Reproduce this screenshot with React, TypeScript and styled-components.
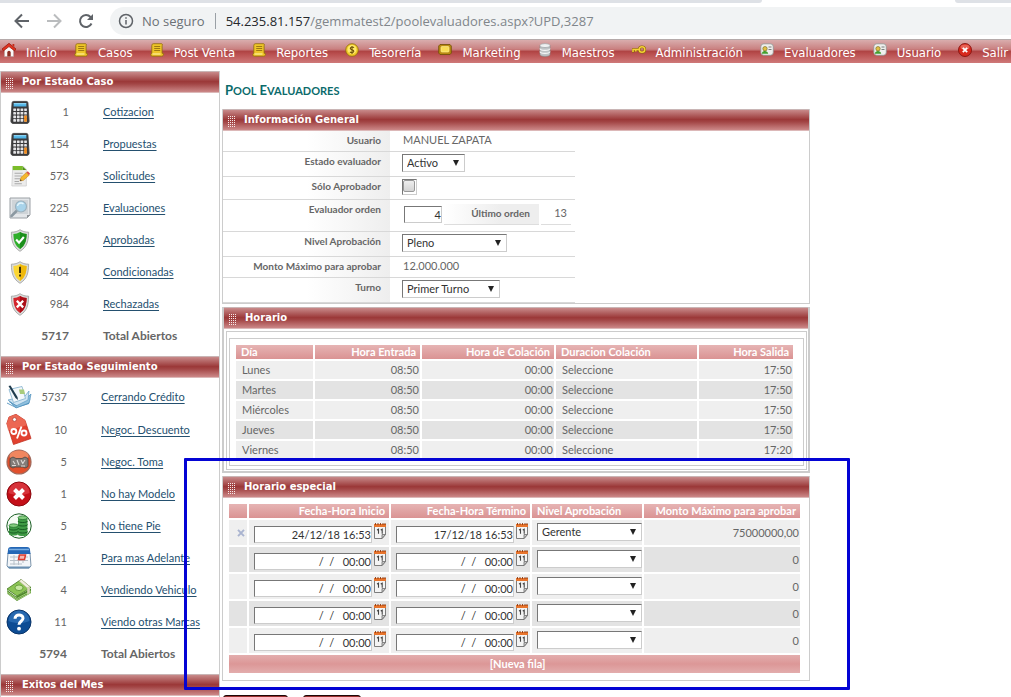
import React from "react";
import styled, { createGlobalStyle } from "styled-components";

const sans = `Lato, "Open Sans", "Liberation Sans", sans-serif`;
const wide = `"DejaVu Sans", Verdana, sans-serif`;
const line = "#cccccc";

const Global = createGlobalStyle`
  * { box-sizing: border-box; }
  html, body { margin: 0; height: 100%; }
  body {
    background: #fff;
    color: #666;
    font: 11px/14px ${sans};
    overflow: hidden;
  }
`;

/* ---------- browser bar ---------- */
const Tabs = styled.div`
  display: flex;
  height: 3px;
  background: #fff;
`;
const TabSpace = styled.div<{ $grow: number; $side: "left" | "right" }>`
  flex: ${(p) => p.$grow} 1 0;
  background: #dee1e6;
  border-radius: ${(p) => (p.$side === "left" ? "0 0 6px 0" : "0 0 0 6px")};
`;
const TabGap = styled.div`
  flex: 193 1 0;
`;
const Toolbar = styled.div`
  display: flex;
  align-items: center;
  height: 36px;
  padding: 0 0 0 14px;
`;
const NavButton = styled.button`
  display: block;
  border: 0;
  padding: 0;
  margin-right: 16px;
  width: 16px;
  height: 16px;
  background: none;
  svg { display: block; }
`;
const Address = styled.div`
  flex: 1;
  display: flex;
  align-items: center;
  height: 28px;
  padding-left: 8px;
  border-radius: 14px 0 0 14px;
  background: #f1f3f4;
  color: #80868b;
  font: 13px/20px "Open Sans", sans-serif;
  white-space: nowrap;
`;
const Security = styled.span`
  margin-left: 8px;
  padding-right: 10px;
  margin-right: 10px;
  border-right: 1px solid #9aa0a6;
  line-height: 16px;
  color: #6b7075;
`;
const Host = styled.span`
  color: #25282c;
`;

/* ---------- menu ---------- */
const Menu = styled.nav`
  display: flex;
  gap: 17px;
  height: 24px;
  padding: 3px 0 0 2px;
  overflow: hidden;
  border-top: 1px solid #b5aaaa;
  background: linear-gradient(#d9adad 0, #c98080 40%, #b04444 50%, #b94e4e 60%, #cf7979 100%);
`;
const MenuLink = styled.a`
  display: flex;
  flex: none;
  gap: 10px;
  color: #fff;
  font: 13px/20px "DejaVu Sans Condensed", "Open Sans", sans-serif;
  text-decoration: none;
  svg { display: block; flex: none; }
`;

/* ---------- layout ---------- */
const Page = styled.div`
  position: relative;
`;
const Columns = styled.div`
  display: flex;
  align-items: flex-start;
  gap: 2px;
  padding-top: 8px;
`;
const Sidebar = styled.aside`
  flex: 0 0 220px;
  border: solid ${line};
  border-width: 0 1px;
`;
const Main = styled.main`
  flex: 1;
  max-width: 588px;
`;
const Title = styled.h1`
  display: flex;
  gap: 3px;
  margin: 0;
  padding: 10px 3px;
  color: #0b6b6b;
  font: bold 11px/18px ${sans};
  text-transform: uppercase;
`;
const TitleWord = styled.span`
  display: block;
  height: 18px;
  &::first-letter { font-size: 13px; }
`;
const Bar = styled.h2`
  display: flex;
  align-items: center;
  gap: 8px;
  height: 22px;
  margin: 0;
  padding: 0 0 1px 5px;
  border-top: 1px solid #c9b5b5;
  border-bottom: 1px solid #dcb8b8;
  background: linear-gradient(#c88a8a 0, #9b3838 48%, #a34646 60%, #cc8888 100%);
  color: #fff;
  font: bold 10px/18px ${wide};
  svg { display: block; margin-top: 3px; }
`;

/* ---------- sidebar ---------- */
const Group = styled.section`
  padding-bottom: 4px;
`;
const GroupList = styled.ul`
  list-style: none;
  margin: 0;
  padding: 3px 0 0;
`;
const GroupRow = styled.li<{ $inset: number; $bold?: boolean }>`
  display: grid;
  grid-template-columns: ${(p) => p.$inset}px 30px 1fr;
  align-items: center;
  min-height: 32px;
  font-size: ${(p) => (p.$bold ? "12px" : "11px")};
  font-weight: ${(p) => (p.$bold ? "bold" : "normal")};
`;
const IconCell = styled.span`
  display: flex;
  justify-content: center;
`;
const Count = styled.span`
  text-align: right;
`;
const GroupLink = styled.a`
  color: #24506f;
  text-decoration: underline;
  text-underline-offset: 2px;
`;
const GroupLabel = styled.span`
  padding-left: 34px;
`;

/* ---------- panels ---------- */
const Panel = styled.section<{ $thick?: boolean }>`
  margin-bottom: 3px;
  border: ${(p) => (p.$thick ? 2 : 1)}px solid ${line};
  border-top-width: 0;
`;
const Form = styled.form`
  max-width: 352px;
`;
const FormRow = styled.div`
  display: grid;
  grid-template-columns: 167px 1fr;
  border-bottom: 1px solid #d8d8d8;
`;
const LabelCell = styled.div`
  padding: 2px 9px 0 0;
  background: linear-gradient(90deg, #fff 50%, #eee);
  text-align: right;
  font-size: 10px;
  font-weight: bold;
`;
const ValueCell = styled.div`
  padding: 2px 0 4px 12px;
`;
const PlainValue = styled.span`
  padding-left: 1px;
`;
const SelectBox = styled.span<{ $width: number }>`
  position: relative;
  display: block;
  width: ${(p) => p.$width}px;
  &::after {
    content: "";
    position: absolute;
    right: 6px;
    top: 6px;
    border: solid transparent;
    border-width: 6px 3px 0;
    border-top-color: #222;
    pointer-events: none;
  }
`;
const Select = styled.select`
  display: block;
  appearance: none;
  width: 100%;
  height: 18px;
  padding: 0 4px;
  border: 1px solid;
  border-color: #777 #ccc #ccc #777;
  border-radius: 0;
  background: #fff;
  color: #333;
  font: 11px/14px ${sans};
`;
const Field = styled.input`
  flex: none;
  width: 118px;
  height: 17px;
  padding: 0;
  border: 1px solid;
  border-color: #777 #ccc #ccc #777;
  background: #fff;
  color: #333;
  font: 11px/14px ${sans};
  text-align: right;
`;
const OrderField = styled(Field)`
  width: 38px;
  margin-top: 2px;
`;
const CheckFrame = styled.span`
  display: block;
  width: 15px;
  height: 16px;
  border: 1px solid;
  border-color: #777 #ccc #ccc #777;
`;
const Check = styled.input`
  display: block;
  appearance: none;
  width: 12px;
  height: 12px;
  margin: 0;
  border: 1px solid #999;
  border-radius: 2px;
  background: linear-gradient(#eee, #d4d4d4);
`;
const OrderLine = styled.div`
  display: flex;
  gap: 2px;
  padding: 2px;
`;
const OrderCell = styled.div<{ $head?: boolean }>`
  width: ${(p) => (p.$head ? 95 : 30)}px;
  height: 21px;
  padding: 2px ${(p) => (p.$head ? 9 : 4)}px 0 0;
  border-bottom: 1px solid #ddd;
  background: ${(p) => (p.$head ? "linear-gradient(90deg, #fff, #eee 60%)" : "none")};
  font-size: ${(p) => (p.$head ? 10 : 11)}px;
  font-weight: ${(p) => (p.$head ? "bold" : "normal")};
  text-align: right;
`;

const OuterFrame = styled.div`
  margin: 2px 1px 1px 2px;
  padding: 6px 2px 3px;
  border: 1px solid ${line};
`;
const InnerFrame = styled.div`
  padding: 4px 8px 4px 4px;
  border: 1px solid ${line};
`;
const EspecialFrame = styled.div`
  padding: 4px 7px 5px 4px;
`;
const Grid = styled.table`
  width: 100%;
  table-layout: fixed;
  border-collapse: separate;
  border-spacing: 2px;
`;
const Head = styled.th<{ $right?: boolean }>`
  height: 14px;
  padding: 0 4px 0 5px;
  background: linear-gradient(#e6b4b4, #da9393);
  color: #fff;
  line-height: 14px;
  text-align: ${(p) => (p.$right ? "right" : "left")};
  white-space: nowrap;
`;
const Row = styled.tr`
  background: #efefef;
  &:nth-child(even) { background: #e3e3e3; }
`;
const Cell = styled.td<{ $right?: boolean }>`
  height: 18px;
  padding: ${(p) => (p.$right ? "0 1px 0 0" : "0 0 0 6px")};
  text-align: ${(p) => (p.$right ? "right" : "left")};
`;
const ControlCell = styled.td`
  height: 25px;
  padding: 0 0 0 5px;
  vertical-align: top;
`;
const SelectPad = styled.div`
  padding-top: 3px;
`;
const DateLine = styled.div`
  display: flex;
  align-items: flex-end;
  gap: 2px;
  height: 23px;
`;
const IconButton = styled.button`
  border: 0;
  padding: 0 0 4px;
  background: none;
  svg { display: block; }
`;
const RemoveCell = styled.td`
  padding: 0;
  text-align: center;
`;
const RemoveButton = styled.button`
  display: block;
  margin: 0 auto;
  padding: 0 0 0 5px;
  border: 0;
  background: none;
  svg { display: block; }
`;
const FootCell = styled.td`
  height: 18px;
  padding: 0;
  background: linear-gradient(#e3adad, #dc9797 50%, #e3adad);
  text-align: center;
`;
const AddRow = styled.button`
  display: block;
  margin: 0 auto;
  padding: 0 0 0 6px;
  border: 0;
  background: none;
  color: #fff;
  font: bold 11px/18px ${sans};
`;
const Actions = styled.div`
  display: flex;
  gap: 15px;
  padding: 11px 0 0 1px;
`;
const Action = styled.button<{ $width: number }>`
  width: ${(p) => p.$width}px;
  height: 26px;
  padding: 8px 0 0;
  border: 1px solid #1c0808;
  border-radius: 3px;
  background: #9b3030;
  color: #fff;
  font: bold 11px/14px ${sans};
`;
const Marker = styled.div`
  position: absolute;
  left: 184px;
  top: 458px;
  width: 666px;
  height: 232px;
  border: 3px solid #0404d4;
  border-radius: 1px;
  pointer-events: none;
`;

/* ---------- drawings ---------- */
const Grip = () => (
  <svg width="8" height="11" viewBox="0 0 8 11" shapeRendering="crispEdges">
    {[0, 2, 4, 6, 8, 10].map((y) =>
      [0, 2, 4, 6].map((x) => <rect key={`${x}-${y}`} x={x} y={y} width="1" height="1" fill="#f7e9e9" />)
    )}
  </svg>
);
const HomeIcon = () => (
  <svg width="14" height="14" viewBox="0 0 14 14">
    <path d="M2.500 6v7.500h9V6L7 2z" fill="#fbf7f6" stroke="#b9a5a5" strokeWidth=".6" />
    <path d="M5.300 13.500V9.500a1.700 1.700 0 0 1 3.400 0v4z" fill="#8c2a20" />
    <path d="M10.500 1h1.800v3l-1.800-1.400z" fill="#c72817" />
    <path d="M7 .3 0 6l1.400 1.900L7 3.600l5.600 4.300L14 6z" fill="#e2321f" stroke="#8f1409" strokeWidth=".7" />
  </svg>
);
const ScrollIcon = () => (
  <svg width="14" height="14" viewBox="0 0 14 14">
    <path d="M3.500.7h7.700c1.400 0 1.600 1.400.9 2v7.500l1.300.3c.3 1.700-.6 2.700-1.800 2.700H2.400C.4 13.200.2 10.800 1.800 10.200V2.600C1.800 1.400 2.500.7 3.500.7z" fill="#eec529" stroke="#8d6b0c" strokeWidth=".8" />
    <path d="M4.200 3.500h6M4.200 5.500h6M4.200 7.500h6" stroke="#94700f" strokeWidth=".9" />
    <path d="M2.500 11h8" stroke="#fbe88a" strokeWidth="1.400" />
  </svg>
);
const CoinIcon = () => (
  <svg width="14" height="14" viewBox="0 0 14 14">
    <circle cx="7" cy="7" r="6.300" fill="#f0c826" stroke="#8d6b0c" strokeWidth=".8" />
    <circle cx="7" cy="6.500" r="4.500" fill="#ffe96b" />
    <path d="M9 4.600C8 3.600 5.300 3.700 5.300 5.400c0 1.700 3.500 1 3.500 2.800 0 1.600-2.800 1.700-3.900.6M7 3v8" stroke="#6e5008" strokeWidth="1.100" fill="none" />
  </svg>
);
const TicketIcon = () => (
  <svg width="14" height="14" viewBox="0 0 14 14">
    <path d="M2 1.500h10l1.300 1.500v7L12 11.500H2L.7 10V3z" fill="#b98b10" stroke="#6d4e06" strokeWidth=".8" />
    <rect x="3" y="3.500" width="8" height="5.500" rx="1" fill="#f9dc55" stroke="#fff1a0" strokeWidth=".6" />
  </svg>
);
const DatabaseIcon = () => (
  <svg width="14" height="14" viewBox="0 0 14 14">
    <path d="M2 2.500v9c0 2.600 10 2.600 10 0v-9z" fill="#bfc3c6" stroke="#85898c" strokeWidth=".6" />
    <ellipse cx="7" cy="2.600" rx="5" ry="2" fill="#eff1f2" stroke="#95999c" strokeWidth=".6" />
    <path d="M2 5.600c0 2.400 10 2.400 10 0M2 8.600c0 2.400 10 2.400 10 0" stroke="#f5f6f7" fill="none" strokeWidth="1.100" />
  </svg>
);
const KeyIcon = () => (
  <svg width="14" height="14" viewBox="0 0 14 14">
    <circle cx="10" cy="6.500" r="2.800" fill="none" stroke="#8a680a" strokeWidth="2.600" />
    <path d="M7.500 6.500H1v3M3.800 6.500v2" stroke="#8a680a" strokeWidth="2.600" fill="none" />
    <circle cx="10" cy="6.500" r="2.800" fill="none" stroke="#f5cf36" strokeWidth="1.500" />
    <path d="M7.500 6.500H1v2.600M3.800 6.500v2" stroke="#f5cf36" strokeWidth="1.500" fill="none" />
  </svg>
);
const CardIcon = () => (
  <svg width="14" height="14" viewBox="0 0 14 14">
    <rect x=".8" y=".8" width="12.500" height="11.500" rx="3" fill="#efefed" stroke="#8f9390" strokeWidth=".8" />
    <path d="M8.500 4h3M8.500 6.500h3" stroke="#7b7f7d" />
    <path d="M1.800 10.700c.3-3.700 5.900-3.700 6.400 0z" fill="#41a02e" />
    <circle cx="5" cy="5.700" r="2.200" fill="#e2bf45" stroke="#6a641f" strokeWidth=".6" />
  </svg>
);
const CloseBallIcon = () => (
  <svg width="14" height="14" viewBox="0 0 14 14">
    <circle cx="7" cy="7" r="6.500" fill="#d8281d" stroke="#7d0d08" strokeWidth=".8" />
    <ellipse cx="7" cy="4" rx="4.500" ry="2.600" fill="#f07a6d" opacity=".7" />
    <path d="m4.800 4.800 4.400 4.400M9.200 4.800 4.800 9.200" stroke="#fff" strokeWidth="1.800" />
  </svg>
);
const CalculatorIcon = () => (
  <svg width="20" height="25" viewBox="0 0 22 26">
    <path d="M4 .8h14c1 0 1.500.5 1.700 1.500l1.300 20c0 1.600-.8 2.700-2.300 2.700H3.300C1.800 25 1 23.900 1 22.300l1.300-20C2.500 1.300 3 .8 4 .8z" fill="#3a3a3c" stroke="#444" />
    <path d="M4.200 2.500h13.600l.3 4H3.900z" fill="#4fb4e6" />
    <path d="M4.200 2.500h13.600l.1 1.500H4.100z" fill="#8ad3f3" />
    {[8.5, 12.4, 16.3, 20.2].map((y) =>
      [3.6, 7.6, 11.6, 15.6].map((x) => (
        <rect key={`${x}-${y}`} x={x} y={y} width="3" height="2.900" rx=".5" fill="#e4e4e6" />
      ))
    )}
    <rect x="15.600" y="16.300" width="3" height="6.800" rx=".5" fill="#f08a1c" />
  </svg>
);
const RequestIcon = () => (
  <svg width="20" height="24" viewBox="0 0 22 24">
    <path d="M3 1.500h12l3 3V23H2z" fill="#ececec" stroke="#c4c4c4" strokeWidth=".7" />
    <path d="M3 1h11v4.500H3z" fill="#7bbd2a" />
    <path d="M14 1.500 18 5.500h-4z" fill="#4f9212" />
    <path d="M5 9h9M5 12h8M5 15h6M5 18h5M5 20.500h8" stroke="#a9a9a9" strokeWidth="1.200" />
    <path d="m11 17.500 1-3.800 6-5.500 3 3-6.200 5.600z" fill="#f4b72d" stroke="#c17e12" strokeWidth=".6" />
    <path d="m18 8.200 1.500-1.400 2.500 2.500L21 11.200z" fill="#d9534b" />
    <path d="m11 17.500.6-2 1.400 1.500z" fill="#333" />
  </svg>
);
const SearchPaperIcon = () => (
  <svg width="22" height="22" viewBox="0 0 22 22">
    <path d="M1 1h20v17l-3 3H1z" fill="#e3e6e9" stroke="#9ba0a5" />
    <path d="M3 3h16v14H3z" fill="#cfd4d8" />
    <path d="m7.500 14-5 5" stroke="#8b98a1" strokeWidth="2.500" strokeLinecap="round" />
    <circle cx="12" cy="9.500" r="5.500" fill="#a8d3ea" stroke="#9db1bd" strokeWidth="1.200" />
    <path d="M8.500 9c.3-2.500 3.500-4.200 6-2" stroke="#e6f6fd" strokeWidth="1.400" fill="none" />
    <path d="M18 21v-3h3z" fill="#8d9297" />
  </svg>
);
const Shield = ({ fill, shade, children }: { fill: string; shade: string; children: React.ReactNode }) => (
  <svg width="20" height="23" viewBox="0 0 20 24">
    <path d="M10 .7c2.500 1.800 5.500 2.600 9 2.600 0 9.500-1.800 15.500-9 20C2.800 18.800 1 12.800 1 3.300c3.500 0 6.500-.8 9-2.600z" fill="#d9dad9" stroke="#9a9c9a" strokeWidth=".8" />
    <path d="M10 3.200c2 1.300 4.200 2 6.900 2.100-.2 7.400-1.700 12-6.900 15.600C4.800 17.300 3.300 12.700 3.100 5.300 5.800 5.200 8 4.500 10 3.200z" fill={fill} />
    <path d="M10 3.200c2 1.300 4.200 2 6.900 2.100-.2 7.400-1.700 12-6.900 15.600z" fill={shade} />
    {children}
  </svg>
);
const ShieldOk = () => (
  <Shield fill="#2fae2b" shade="#1b8f1c">
    <path d="m6 11 3 3.300 5-6" stroke="#fff" strokeWidth="2.200" fill="none" />
  </Shield>
);
const ShieldWarn = () => (
  <Shield fill="#fbd634" shade="#efb90c">
    <path d="M10 6v6.500M10 14v2.200" stroke="#3a2c05" strokeWidth="2" />
  </Shield>
);
const ShieldNo = () => (
  <Shield fill="#d3242c" shade="#aa0e17">
    <path d="m6.700 8 6.600 7M13.300 8l-6.600 7" stroke="#fff" strokeWidth="2.400" />
  </Shield>
);
const PenPaperIcon = () => (
  <svg width="26" height="24" viewBox="0 0 26 24">
    <path d="m8 20 16-4 1-6-2 9-13 4z" fill="#4e8fbb" />
    <path d="m4 17 17-4 4-4-2 9-13 5z" fill="#8fc0de" stroke="#4e8fbb" strokeWidth=".7" />
    <path d="M2 15 19 11l4-5-1 9-12 6z" fill="#cfe4f2" stroke="#5f9cc4" strokeWidth=".7" />
    <path d="M3 4.500 16 1.500l3.500 12-12 4z" fill="#f3f8fb" stroke="#82b0cd" strokeWidth=".8" />
    <path d="M13 4.500h5l1 4.500h-5z" fill="#a9cc7d" />
    <path d="m2.500 1 2-.5L11.500 12l.5 3-2.500-2z" fill="#1f3b4d" />
    <path d="m1 18 9 4.500M3 16.500l8 4.500" stroke="#5f9cc4" />
  </svg>
);
const TagIcon = () => (
  <svg width="26" height="33" viewBox="0 0 26 32">
    <path d="M3 3.500 10 .8l9 6L25 25 7.500 31 .8 10z" fill="#e2412f" stroke="#c23423" strokeWidth=".8" />
    <path d="M3 3.500 10 .8l9 6 1.500 5L2 17 .8 10z" fill="#f17762" opacity=".7" />
    <circle cx="8.500" cy="6" r="1.900" fill="#fff" stroke="#a73426" strokeWidth=".7" />
    <g fill="none" stroke="#fff" strokeWidth="1.900">
      <circle cx="7.800" cy="18" r="2.500" />
      <circle cx="18" cy="19.500" r="2.500" />
      <path d="m15.500 13-4.500 12" />
    </g>
  </svg>
);
const DealIcon = () => (
  <svg width="26" height="26" viewBox="0 0 26 26">
    <circle cx="13" cy="13" r="12" fill="#e2502c" stroke="#a06a5c" strokeWidth="1.200" />
    <ellipse cx="13" cy="7" rx="9.500" ry="5.500" fill="#f4936d" opacity=".8" />
    <path d="M4 9.500 7 8l3 1.500h6L19 8l3 1.500v8L19 19l-2-1H9l-2 1-3-1.500z" fill="#837c78" stroke="#4a4541" strokeWidth=".8" />
    <path d="m7 12 2 3M11 11l2 5M15 11l2 4M19 11l-2 3M6 16.500h4M15 17h4" stroke="#ded9d5" strokeWidth="1.100" />
  </svg>
);
const CrossBallIcon = () => (
  <svg width="26" height="26" viewBox="0 0 26 26">
    <circle cx="13" cy="13" r="12" fill="#c40f18" stroke="#8b0a10" />
    <path d="M2.500 12a10.500 10.500 0 0 1 21 0c-5 2.500-14 3-21 0z" fill="#e0434a" opacity=".7" />
    <path d="m8.500 8.500 9 9M17.500 8.500l-9 9" stroke="#fff" strokeWidth="4" />
  </svg>
);
const CoinsIcon = () => (
  <svg width="26" height="26" viewBox="0 0 26 26">
    <circle cx="13" cy="13" r="12.200" fill="#f6fbf5" stroke="#1b5f25" />
    <path d="M12 4.500v17c0 2 9.500 2 9.500 0v-17z" fill="#3f9a45" />
    <path d="M3 12.500v8.500c0 2 9 2 9 0v-8.500z" fill="#3f9a45" />
    <ellipse cx="16.700" cy="4.700" rx="4.700" ry="1.900" fill="#83cc7e" stroke="#1d6b28" strokeWidth=".7" />
    <ellipse cx="7.500" cy="12.600" rx="4.500" ry="1.800" fill="#83cc7e" stroke="#1d6b28" strokeWidth=".7" />
    <path d="M12 8c0 2 9.500 2 9.500 0M12 11.500c0 2 9.500 2 9.500 0M12 15c0 2 9.500 2 9.500 0M12 18.500c0 2 9.500 2 9.500 0M3 15.500c0 2 9 2 9 0M3 18.500c0 2 9 2 9 0" fill="none" stroke="#12551d" strokeWidth=".9" />
  </svg>
);
const PlannerIcon = () => (
  <svg width="26" height="24" viewBox="0 0 26 24">
    <path d="M2 7h22l1 13-2 2H3l-2-2z" fill="#f3f6f9" stroke="#7d95ab" />
    <path d="M2 4c0-2 1-3 3-3h16c2 0 3 1 3 3l.5 4H1.500z" fill="#2467b5" />
    <path d="M3 3.500h20" stroke="#79aee2" strokeWidth="1.500" />
    <path d="M4 11h18M4 14.500h18M4 18h12M8 9v10M12.500 9v10M17 9v8" stroke="#b7c0c8" />
    <path d="M13.500 9h6l-1 4.500h-6z" fill="#f6b8b1" stroke="#dc3a2c" strokeWidth="1.500" />
    <path d="M1 20.500h24l-2 2H3z" fill="#6a8fb2" />
  </svg>
);
const CashIcon = () => (
  <svg width="26" height="24" viewBox="0 0 26 24">
    <path d="m1 12 9 6.500 15-8V15L11 23 1.500 16z" fill="#4f8a2a" />
    <path d="m1 13.800 10 6.700 14-7.500M1.500 15.500 11 22l14-7.300" stroke="#b6dc8e" fill="none" strokeWidth=".8" />
    <path d="M1 11 15 1.500l10 8L11 18z" fill="#8cc455" stroke="#43791f" strokeWidth=".8" />
    <ellipse cx="13" cy="9.800" rx="4" ry="2.800" fill="#c6e6a0" stroke="#5b9430" strokeWidth=".8" />
    <path d="m13 3 2.500-1.500 8.300 7-2.600 1.500z" fill="#f0eee0" stroke="#b5af8c" strokeWidth=".5" />
    <path d="m21.200 10 2.600-1.500v6.500l-2.600 1.500z" fill="#d8d4ba" />
  </svg>
);
const QuestionIcon = () => (
  <svg width="26" height="26" viewBox="0 0 26 26">
    <circle cx="13" cy="13" r="12" fill="#0d4c94" stroke="#0a3468" />
    <path d="M2.500 12a10.500 10.500 0 0 1 21 0c-5 2.500-14 3-21 0z" fill="#3c7fc4" opacity=".55" />
    <path d="M9 9.800c0-5 8-5 8-.5 0 3-4 3-4 6.500" stroke="#fff" strokeWidth="3" fill="none" />
    <circle cx="13" cy="19.700" r="1.900" fill="#fff" />
  </svg>
);
const CalendarIcon = () => (
  <svg width="12" height="16" viewBox="0 0 12 16">
    <path d="M.5 3h11v8.500L8 15.500H.5z" fill="#f4f4f4" stroke="#7d7d7d" />
    <path d="M11.500 11.500H8v4z" fill="#c9c9c9" stroke="#6d6d6d" strokeWidth=".8" />
    <path d="M0 1h12v3H0z" fill="#e8742c" />
    <path d="M1.500 0v2M4 0v2M6.500 0v2M9 0v2M11 0v2" stroke="#8b3a12" strokeWidth=".9" />
    <path d="m3 7 1.500-.8v4.500M6.700 7l1.500-.8v4.500" stroke="#444" strokeWidth="1.100" fill="none" />
  </svg>
);
const SmallCross = () => (
  <svg width="8" height="8" viewBox="0 0 8 8">
    <path d="m1 .8 6 6.400M7 .8 1 7.200" stroke="#aab4d0" strokeWidth="1.900" />
  </svg>
);

/* ---------- data ---------- */
const menu: [string, React.FC][] = [
  ["Inicio", HomeIcon],
  ["Casos", ScrollIcon],
  ["Post Venta", ScrollIcon],
  ["Reportes", ScrollIcon],
  ["Tesorería", CoinIcon],
  ["Marketing", TicketIcon],
  ["Maestros", DatabaseIcon],
  ["Administración", KeyIcon],
  ["Evaluadores", CardIcon],
  ["Usuario", CardIcon],
  ["Salir", CloseBallIcon],
];
const estadoCaso: [string, string, React.FC][] = [
  ["1", "Cotizacion", CalculatorIcon],
  ["154", "Propuestas", CalculatorIcon],
  ["573", "Solicitudes", RequestIcon],
  ["225", "Evaluaciones", SearchPaperIcon],
  ["3376", "Aprobadas", ShieldOk],
  ["404", "Condicionadas", ShieldWarn],
  ["984", "Rechazadas", ShieldNo],
];
const seguimiento: [string, string, React.FC][] = [
  ["5737", "Cerrando Crédito", PenPaperIcon],
  ["10", "Negoc. Descuento", TagIcon],
  ["5", "Negoc. Toma", DealIcon],
  ["1", "No hay Modelo", CrossBallIcon],
  ["5", "No tiene Pie", CoinsIcon],
  ["21", "Para mas Adelante", PlannerIcon],
  ["4", "Vendiendo Vehiculo", CashIcon],
  ["11", "Viendo otras Marcas", QuestionIcon],
];
const horario = [
  ["Lunes", "17:50"],
  ["Martes", "17:50"],
  ["Miércoles", "17:50"],
  ["Jueves", "17:50"],
  ["Viernes", "17:20"],
];
const blank = "/  /   00:00";
const especial = [
  ["24/12/18 16:53", "17/12/18 16:53", "Gerente", "75000000,00"],
  [blank, blank, "", "0"],
  [blank, blank, "", "0"],
  [blank, blank, "", "0"],
  [blank, blank, "", "0"],
];

const BarTitle = ({ children }: { children: string }) => (
  <Bar>
    <Grip />
    {children}
  </Bar>
);

function StatusGroup(props: { title: string; rows: [string, string, React.FC][]; total: string; inset: number }) {
  return (
    <Group>
      <BarTitle>{props.title}</BarTitle>
      <GroupList>
        {props.rows.map(([count, name, Icon]) => (
          <GroupRow key={name} $inset={props.inset}>
            <IconCell>
              <Icon />
            </IconCell>
            <Count>{count}</Count>
            <GroupLabel>
              <GroupLink href="#">{name}</GroupLink>
            </GroupLabel>
          </GroupRow>
        ))}
        <GroupRow $inset={props.inset} $bold>
          <span />
          <Count>{props.total}</Count>
          <GroupLabel>Total Abiertos</GroupLabel>
        </GroupRow>
      </GroupList>
    </Group>
  );
}

function Choice(props: { id?: string; label?: string; width: number; value: string }) {
  return (
    <SelectBox $width={props.width}>
      <Select id={props.id} aria-label={props.label} defaultValue={props.value}>
        <option>{props.value}</option>
      </Select>
    </SelectBox>
  );
}

function DateCell({ value, label }: { value: string; label: string }) {
  return (
    <ControlCell>
      <DateLine>
        <Field aria-label={label} defaultValue={value} />
        <IconButton type="button" aria-label={`Calendario ${label}`}>
          <CalendarIcon />
        </IconButton>
      </DateLine>
    </ControlCell>
  );
}

export default function App() {
  return (
    <Page>
      <Global />
      <Tabs>
        <TabSpace $grow={762} $side="left" />
        <TabGap />
        <TabSpace $grow={56} $side="right" />
      </Tabs>
      <Toolbar>
        <NavButton aria-label="Atrás">
          <svg width="16" height="16" viewBox="0 0 16 16" fill="none" stroke="#5f6368" strokeWidth="2">
            <path d="M15 8H2M8 1.500 1.500 8 8 14.500" />
          </svg>
        </NavButton>
        <NavButton aria-label="Adelante">
          <svg width="16" height="16" viewBox="0 0 16 16" fill="none" stroke="#babcbe" strokeWidth="2">
            <path d="M1 8h13M8 1.500 14.500 8 8 14.500" />
          </svg>
        </NavButton>
        <NavButton aria-label="Recargar">
          <svg width="16" height="16" viewBox="0 0 16 16" fill="none" stroke="#5f6368" strokeWidth="2">
            <path d="M13.500 10.500A6 6 0 1 1 12.500 4L14 5.500" />
            <path d="M15 1v6H9z" fill="#5f6368" stroke="none" />
          </svg>
        </NavButton>
        <Address>
          <svg width="16" height="16" viewBox="0 0 16 16" fill="none" stroke="#5f6368" strokeWidth="1.500">
            <circle cx="8" cy="8" r="6.500" />
            <path d="M8 7v4.500M8 4.200v1.600" />
          </svg>
          <Security>No seguro</Security>
          <Host>54.235.81.157</Host>/gemmatest2/poolevaluadores.aspx?UPD,3287
        </Address>
      </Toolbar>
      <Menu>
        {menu.map(([name, Icon]) => (
          <MenuLink href="#" key={name}>
            <Icon />
            {name}
          </MenuLink>
        ))}
      </Menu>
      <Columns>
        <Sidebar>
          <StatusGroup title="Por Estado Caso" rows={estadoCaso} total="5717" inset={38} />
          <StatusGroup title="Por Estado Seguimiento" rows={seguimiento} total="5794" inset={36} />
          <Group>
            <BarTitle>Exitos del Mes</BarTitle>
          </Group>
        </Sidebar>
        <Main>
          <Title>
            <TitleWord>Pool</TitleWord> <TitleWord>Evaluadores</TitleWord>
          </Title>
          <Panel>
            <BarTitle>Información General</BarTitle>
            <Form>
              <FormRow>
                <LabelCell>Usuario</LabelCell>
                <ValueCell>
                  <PlainValue>MANUEL ZAPATA</PlainValue>
                </ValueCell>
              </FormRow>
              <FormRow>
                <LabelCell>
                  <label htmlFor="estado">Estado evaluador</label>
                </LabelCell>
                <ValueCell>
                  <Choice id="estado" width={63} value="Activo" />
                </ValueCell>
              </FormRow>
              <FormRow>
                <LabelCell>
                  <label htmlFor="solo">Sólo Aprobador</label>
                </LabelCell>
                <ValueCell>
                  <CheckFrame>
                    <Check id="solo" type="checkbox" />
                  </CheckFrame>
                </ValueCell>
              </FormRow>
              <FormRow>
                <LabelCell>
                  <label htmlFor="orden">Evaluador orden</label>
                </LabelCell>
                <ValueCell>
                  <OrderLine>
                    <OrderField id="orden" defaultValue="4" />
                    <OrderCell $head>Último orden</OrderCell>
                    <OrderCell>13</OrderCell>
                  </OrderLine>
                </ValueCell>
              </FormRow>
              <FormRow>
                <LabelCell>
                  <label htmlFor="nivel">Nivel Aprobación</label>
                </LabelCell>
                <ValueCell>
                  <Choice id="nivel" width={105} value="Pleno" />
                </ValueCell>
              </FormRow>
              <FormRow>
                <LabelCell>Monto Máximo para aprobar</LabelCell>
                <ValueCell>
                  <PlainValue>12.000.000</PlainValue>
                </ValueCell>
              </FormRow>
              <FormRow>
                <LabelCell>
                  <label htmlFor="turno">Turno</label>
                </LabelCell>
                <ValueCell>
                  <Choice id="turno" width={98} value="Primer Turno" />
                </ValueCell>
              </FormRow>
            </Form>
          </Panel>
          <Panel $thick>
            <BarTitle>Horario</BarTitle>
            <OuterFrame>
              <InnerFrame>
                <Grid>
                  <colgroup>
                    <col width="77" />
                    <col width="105" />
                    <col width="132" />
                    <col width="141" />
                    <col width="94" />
                  </colgroup>
                  <thead>
                    <tr>
                      <Head>Día</Head>
                      <Head $right>Hora Entrada</Head>
                      <Head $right>Hora de Colación</Head>
                      <Head>Duracion Colación</Head>
                      <Head $right>Hora Salida</Head>
                    </tr>
                  </thead>
                  <tbody>
                    {horario.map(([day, out]) => (
                      <Row key={day}>
                        <Cell>{day}</Cell>
                        <Cell $right>08:50</Cell>
                        <Cell $right>00:00</Cell>
                        <Cell>Seleccione</Cell>
                        <Cell $right>{out}</Cell>
                      </Row>
                    ))}
                  </tbody>
                </Grid>
              </InnerFrame>
            </OuterFrame>
          </Panel>
          <Panel>
            <BarTitle>Horario especial</BarTitle>
            <EspecialFrame>
              <Grid>
                <colgroup>
                  <col width="18" />
                  <col width="140" />
                  <col width="139" />
                  <col width="110" />
                  <col width="156" />
                </colgroup>
                <thead>
                  <tr>
                    <Head />
                    <Head $right>Fecha-Hora Inicio</Head>
                    <Head $right>Fecha-Hora Término</Head>
                    <Head>Nivel Aprobación</Head>
                    <Head $right>Monto Máximo para aprobar</Head>
                  </tr>
                </thead>
                <tbody>
                  {especial.map(([from, to, level, amount], i) => (
                    <Row key={i}>
                      <RemoveCell>
                        {i === 0 && (
                          <RemoveButton type="button" aria-label="Eliminar fila">
                            <SmallCross />
                          </RemoveButton>
                        )}
                      </RemoveCell>
                      <DateCell value={from} label="Fecha-Hora Inicio" />
                      <DateCell value={to} label="Fecha-Hora Término" />
                      <ControlCell>
                        <SelectPad>
                          <Choice label="Nivel Aprobación" width={105} value={level} />
                        </SelectPad>
                      </ControlCell>
                      <Cell $right>{amount}</Cell>
                    </Row>
                  ))}
                </tbody>
                <tfoot>
                  <tr>
                    <FootCell colSpan={5}>
                      <AddRow type="button">[Nueva fila]</AddRow>
                    </FootCell>
                  </tr>
                </tfoot>
              </Grid>
            </EspecialFrame>
          </Panel>
          <Actions>
            <Action $width={65} aria-label="Confirmar" />
            <Action $width={58} aria-label="Cerrar" />
          </Actions>
        </Main>
      </Columns>
      <Marker />
    </Page>
  );
}
